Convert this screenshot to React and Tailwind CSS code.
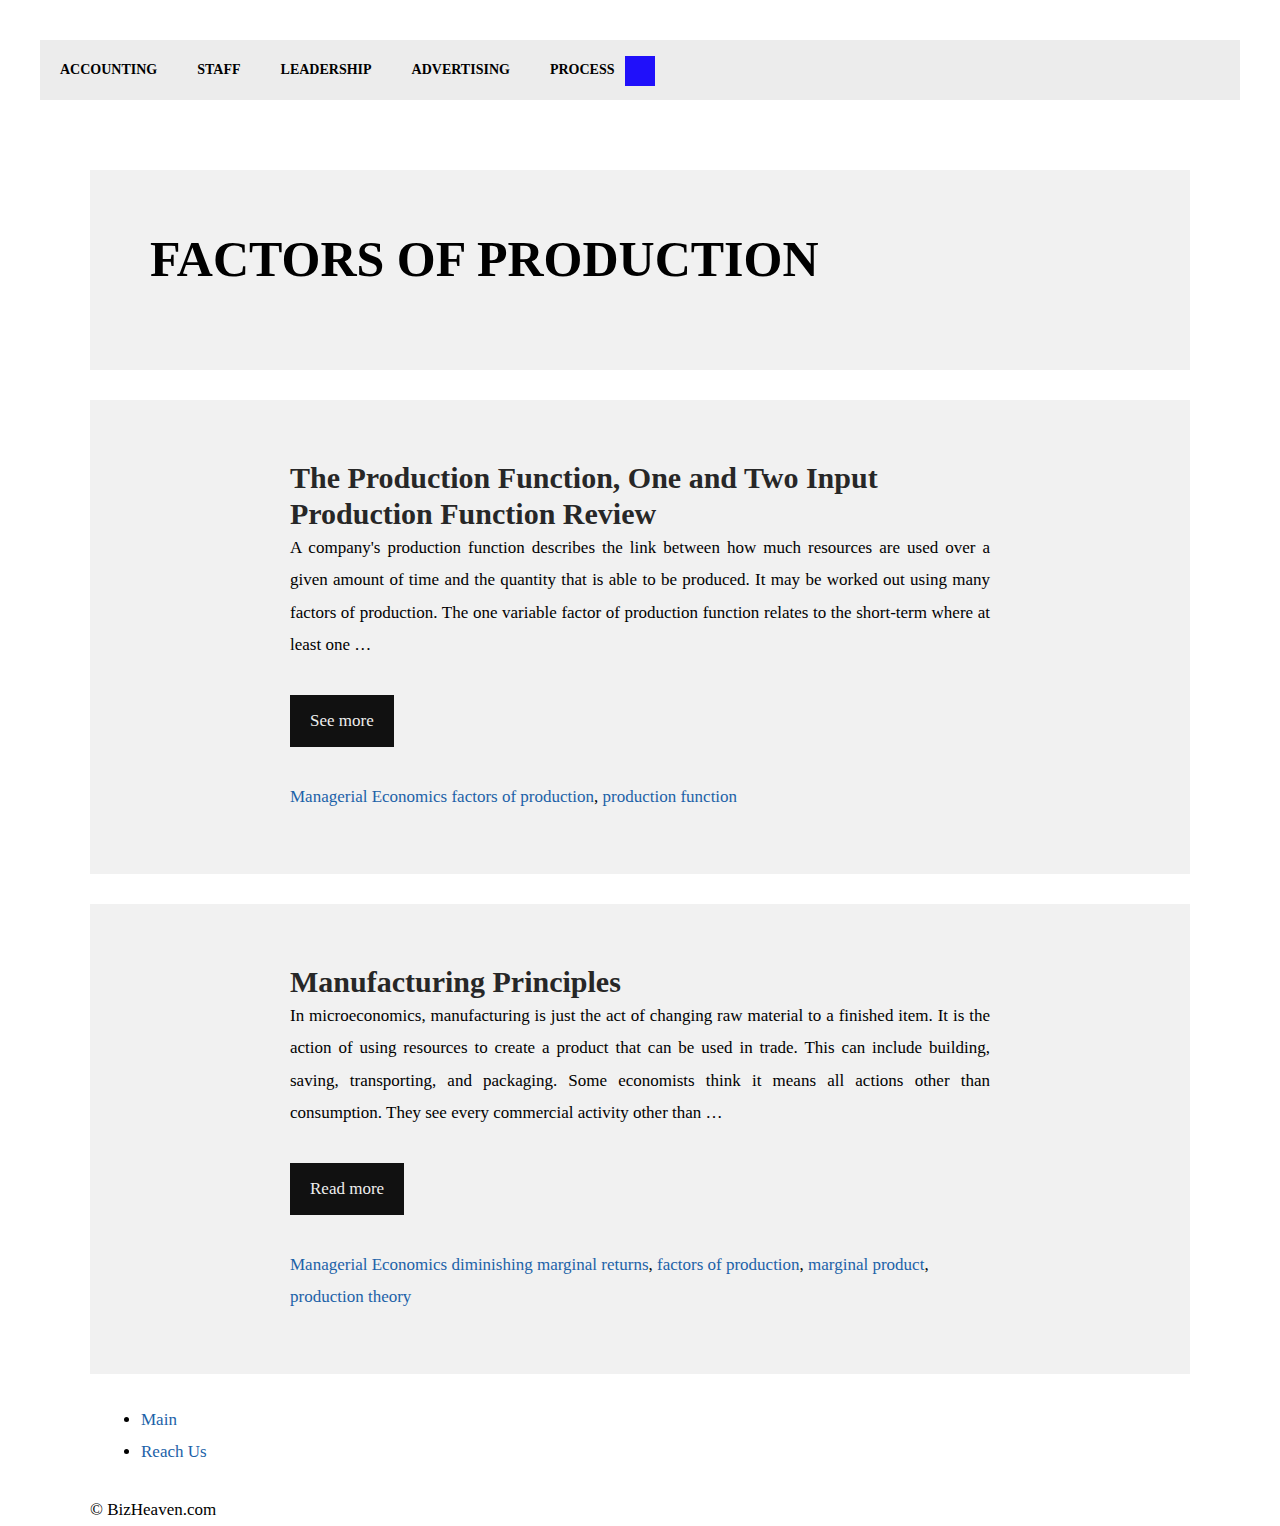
import React from "react";

const navItems = ["Accounting", "Staff", "Leadership", "Advertising", "Process"];

const posts = [
  {
    id: 1,
    title: "The Production Function, One and Two Input Production Function Review",
    excerpt:
      "A company's production function describes the link between how much resources are used over a given amount of time and the quantity that is able to be produced. It may be worked out using many factors of production. The one variable factor of production function relates to the short-term where at least one …",
    button: "See more",
    tags: ["factors of production", "production function"],
  },
  {
    id: 2,
    title: "Manufacturing Principles",
    excerpt:
      "In microeconomics, manufacturing is just the act of changing raw material to a finished item. It is the action of using resources to create a product that can be used in trade. This can include building, saving, transporting, and packaging. Some economists think it means all actions other than consumption. They see every commercial activity other than …",
    button: "Read more",
    tags: [
      "diminishing marginal returns",
      "factors of production",
      "marginal product",
      "production theory",
    ],
  },
];

const PostCard = ({ post }) => {
  return (
    <article className="bg-[#f1f1f1] pt-[60px] pb-[61px]">
      <div className="mx-auto w-[700px]">
        <h2 className="text-[30px] leading-[36px] font-bold text-[#272727]">
          {post.title}
        </h2>
        <p className="text-[17px] leading-[32.4px] text-justify text-black">
          {post.excerpt}
        </p>
        <a
          href="#"
          className="mt-[33px] inline-block bg-[#111111] px-5 pt-[15px] pb-[16px] text-[17px] leading-[21px] text-[#eeeeee]"
        >
          {post.button}
        </a>
        <div className="mt-[34px] text-[17px] leading-[32.4px] text-black">
          <a href="#" className="text-[#1c62a8]">
            Managerial Economics
          </a>{" "}
          {post.tags.map((tag, i) => (
            <React.Fragment key={tag}>
              <a href="#" className="text-[#1c62a8]">
                {tag}
              </a>
              {i < post.tags.length - 1 ? ", " : ""}
            </React.Fragment>
          ))}
        </div>
      </div>
    </article>
  );
};

const App = () => {
  return (
    <div className="min-h-[1526px] bg-white px-10 pt-10 font-['Liberation_Serif','Times_New_Roman',serif] text-black">
      <nav className="flex h-[60px] items-center bg-[#ececec]">
        {navItems.map((item, i) => (
          <a
            key={item}
            href="#"
            className={`mb-[2px] text-[14px] font-bold uppercase text-black ${
              i === navItems.length - 1 ? "pl-5 pr-[11px]" : "px-5"
            }`}
          >
            {item}
          </a>
        ))}
        <span className="mt-[2px] block h-[30px] w-[30px] bg-[#2010fa]"></span>
      </nav>

      <main className="mx-[50px] mt-[70px] flex flex-col gap-[30px]">
        <header className="h-[200px] bg-[#f1f1f1] px-[60px] pt-[61px]">
          <h1 className="text-[50px] font-bold uppercase leading-[57px] text-black">
            Factors of Production
          </h1>
        </header>

        {posts.map((post) => (
          <PostCard key={post.id} post={post} />
        ))}
      </main>

      <footer className="mx-[50px]">
        <ul className="mt-[30px] list-disc pl-[51px] text-[17px] leading-[32px]">
          <li>
            <a href="#" className="text-[#1c62a8]">
              Main
            </a>
          </li>
          <li>
            <a href="#" className="text-[#1c62a8]">
              Reach Us
            </a>
          </li>
        </ul>
        <p className="mt-[26px] text-[17px] leading-[32px]">© BizHeaven.com</p>
      </footer>
    </div>
  );
};

export default App;
